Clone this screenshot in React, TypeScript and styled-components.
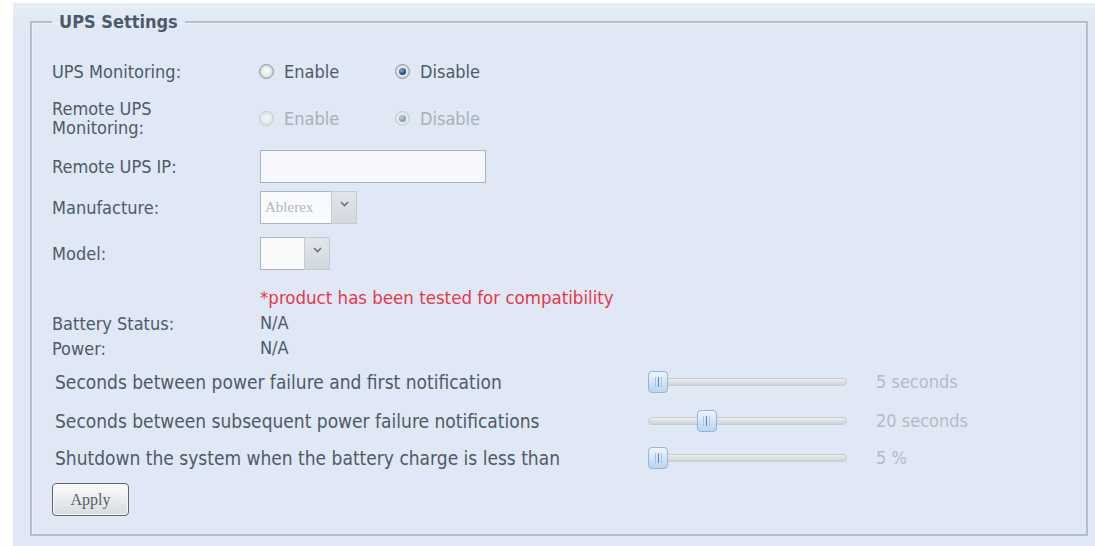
import React from "react";
import styled, { createGlobalStyle } from "styled-components";

const GlobalStyle = createGlobalStyle`
  html, body { margin: 0; padding: 0; background: #ffffff; }
  body {
    font-family: "DejaVu Sans Condensed", "DejaVu Sans", Tahoma, sans-serif;
    font-size: 18px;
    color: #4f5a67;
  }
`;

const Page = styled.div`
  width: 1095px;
  height: 546px;
  box-sizing: border-box;
  padding: 3px 0 0 13px;
  overflow: hidden;
`;

const Panel = styled.div`
  box-sizing: border-box;
  height: 100%;
  padding: 8px 7px 10px 17px;
  background: linear-gradient(#e7eef6 0px, #e1e9f4 18px, #dfe8f4 40px);
`;

const Fieldset = styled.fieldset`
  margin: 0;
  box-sizing: border-box;
  height: 525px;
  padding: 0 20px 0 20px;
  border: 2px solid #b4bfcc;
  border-radius: 1px;
  box-shadow: inset 1px 1px 0 #eef3f9;
`;

const Legend = styled.legend`
  padding: 0 7px;
  margin-left: 0;
  font-weight: bold;
  font-size: 18px;
  line-height: 22px;
  color: #4b5a6d;
`;

const Body = styled.div`
  display: flex;
  flex-direction: column;
  padding-top: 23px;
`;

const Row = styled.div<{ $h: number; $mt: number }>`
  display: flex;
  align-items: center;
  height: ${(p) => p.$h}px;
  margin-top: ${(p) => p.$mt}px;
`;

const Label = styled.div`
  width: 208px;
  flex-shrink: 0;
  line-height: 19px;
`;

const Value = styled.div`
  line-height: 20px;
`;

const Option = styled.label<{ $disabled?: boolean }>`
  display: flex;
  align-items: center;
  gap: 10px;
  width: 137px;
  margin-left: -1px;
  color: ${(p) => (p.$disabled ? "#a8b0b9" : "#4f5a67")};
`;

const RadioCircle = styled.span<{ $checked: boolean; $disabled?: boolean }>`
  position: relative;
  width: 15px;
  height: 15px;
  box-sizing: border-box;
  flex-shrink: 0;
  border-radius: 50%;
  border: 1px solid ${(p) => (p.$disabled ? "#c2cad3" : "#8f9aa6")};
  background: radial-gradient(
    circle at 50% 45%,
    ${(p) => (p.$disabled ? "#f3f5f7" : "#fbfbf3")} 0%,
    ${(p) => (p.$disabled ? "#e6eaee" : "#e7eae6")} 50%,
    ${(p) => (p.$disabled ? "#cfd6dd" : "#b9c2cb")} 100%
  );
  box-shadow: inset 0 0 0 1px ${(p) => (p.$disabled ? "#dde3e9" : "#c8d0d8")};
  &::after {
    content: "";
    position: absolute;
    inset: 3px;
    border-radius: 50%;
    display: ${(p) => (p.$checked ? "block" : "none")};
    opacity: ${(p) => (p.$disabled ? 0.5 : 1)};
    background: radial-gradient(circle at 40% 35%, #8cb6d6 0%, #2e5b80 50%, #183a57 100%);
  }
`;

const TextInput = styled.div`
  width: 226px;
  height: 33px;
  box-sizing: border-box;
  border: 1px solid #a9b3bd;
  background: #f6f8fb;
`;

const Select = styled.div`
  display: flex;
  height: 33px;
  box-sizing: border-box;
`;

const SelectBox = styled.div<{ $w: number }>`
  width: ${(p) => p.$w}px;
  box-sizing: border-box;
  border: 1px solid #adb6bf;
  border-right: none;
  background: #f8fafc;
  display: flex;
  align-items: center;
  padding-left: 4px;
  font-family: "Liberation Serif", "DejaVu Serif", serif;
  font-size: 15px;
  color: #b3b7bc;
`;

const SelectArrow = styled.div`
  width: 26px;
  box-sizing: border-box;
  border: 1px solid #c6ccd2;
  background: linear-gradient(#e2e6ea, #d2d8de);
  display: flex;
  align-items: flex-start;
  justify-content: center;
  padding-top: 9px;
`;

const Note = styled.div`
  padding-left: 208px;
  color: #e5384a;
  font-size: 18.5px;
  line-height: 20px;
`;

const SliderText = styled.div`
  width: 593px;
  padding-left: 3px;
  flex-shrink: 0;
  font-size: 19px;
  line-height: 20px;
`;

const Track = styled.div`
  position: relative;
  width: 199px;
  height: 8px;
  box-sizing: border-box;
  border-radius: 4px;
  border: 1px solid #c9cdd1;
  background: linear-gradient(#eceef0, #cfd3d6);
  flex-shrink: 0;
`;

const Thumb = styled.div`
  position: absolute;
  top: -8px;
  width: 20px;
  height: 22px;
  box-sizing: border-box;
  border-radius: 4px;
  border: 1px solid #94b4d9;
  background: linear-gradient(#eef5fd, #cfe2f6 55%, #bcd5ef);
  display: flex;
  justify-content: center;
  align-items: center;
  gap: 2px;
`;

const Grip = styled.span<{ $dark?: boolean }>`
  width: 1px;
  height: 10px;
  background: ${(p) => (p.$dark ? "#5f84ad" : "#a9c4e2")};
`;

const SliderValue = styled.div`
  margin-left: 29px;
  color: #b3bbc5;
  line-height: 20px;
`;

const ApplyButton = styled.button`
  width: 77px;
  height: 33px;
  box-sizing: border-box;
  border: 1px solid #5d6772;
  border-radius: 4px;
  background: linear-gradient(#fbfcfd, #e9ecef 50%, #d6dbe0);
  box-shadow: inset 0 0 0 1px #f4f6f8;
  font-family: "Liberation Serif", "DejaVu Serif", serif;
  font-size: 16px;
  color: #5a5e63;
  padding: 0;
`;

const Chevron = () => (
  <svg width="9" height="6" viewBox="0 0 9 6">
    <path d="M1 1 L4.5 4.5 L8 1" fill="none" stroke="#6a737c" strokeWidth="1.6" />
  </svg>
);

type RadioProps = { label: string; checked: boolean; disabled?: boolean };
const Radio = ({ label, checked, disabled }: RadioProps) => (
  <Option $disabled={disabled}>
    <RadioCircle $checked={checked} $disabled={disabled} />
    {label}
  </Option>
);

type SliderProps = { text: string; value: number; min: number; max: number; unit: string; mt: number };
const SliderRow = ({ text, value, min, max, unit, mt }: SliderProps) => {
  const left = ((value - min) / (max - min)) * (199 - 20);
  return (
    <Row $h={24} $mt={mt}>
      <SliderText>{text}</SliderText>
      <Track>
        <Thumb style={{ left: left - 1 }}>
          <Grip />
          <Grip $dark />
          <Grip />
        </Thumb>
      </Track>
      <SliderValue>
        {value} {unit}
      </SliderValue>
    </Row>
  );
};

export default function App() {
  return (
    <>
      <GlobalStyle />
      <Page>
        <Panel>
          <Fieldset>
            <Legend>UPS Settings</Legend>
            <Body>
              <Row $h={30} $mt={0}>
                <Label>UPS Monitoring:</Label>
                <Radio label="Enable" checked={false} />
                <Radio label="Disable" checked />
              </Row>
              <Row $h={40} $mt={12}>
                <Label>
                  Remote UPS
                  <br />
                  Monitoring:
                </Label>
                <Radio label="Enable" checked={false} disabled />
                <Radio label="Disable" checked disabled />
              </Row>
              <Row $h={33} $mt={12}>
                <Label>Remote UPS IP:</Label>
                <TextInput />
              </Row>
              <Row $h={33} $mt={8}>
                <Label>Manufacture:</Label>
                <Select>
                  <SelectBox $w={71}>Ablerex</SelectBox>
                  <SelectArrow>
                    <Chevron />
                  </SelectArrow>
                </Select>
              </Row>
              <Row $h={32} $mt={13}>
                <Label>Model:</Label>
                <Select>
                  <SelectBox $w={44} />
                  <SelectArrow>
                    <Chevron />
                  </SelectArrow>
                </Select>
              </Row>
              <Row $h={22} $mt={18}>
                <Note>*product has been tested for compatibility</Note>
              </Row>
              <Row $h={22} $mt={3}>
                <Label>Battery Status:</Label>
                <Value>N/A</Value>
              </Row>
              <Row $h={22} $mt={3}>
                <Label>Power:</Label>
                <Value>N/A</Value>
              </Row>
              <SliderRow
                text="Seconds between power failure and first notification"
                value={5}
                min={5}
                max={60}
                unit="seconds"
                mt={11}
              />
              <SliderRow
                text="Seconds between subsequent power failure notifications"
                value={20}
                min={5}
                max={60}
                unit="seconds"
                mt={15}
              />
              <SliderRow
                text="Shutdown the system when the battery charge is less than"
                value={5}
                min={5}
                max={60}
                unit="%"
                mt={13}
              />
              <Row $h={33} $mt={13}>
                <ApplyButton>Apply</ApplyButton>
              </Row>
            </Body>
          </Fieldset>
        </Panel>
      </Page>
    </>
  );
}
